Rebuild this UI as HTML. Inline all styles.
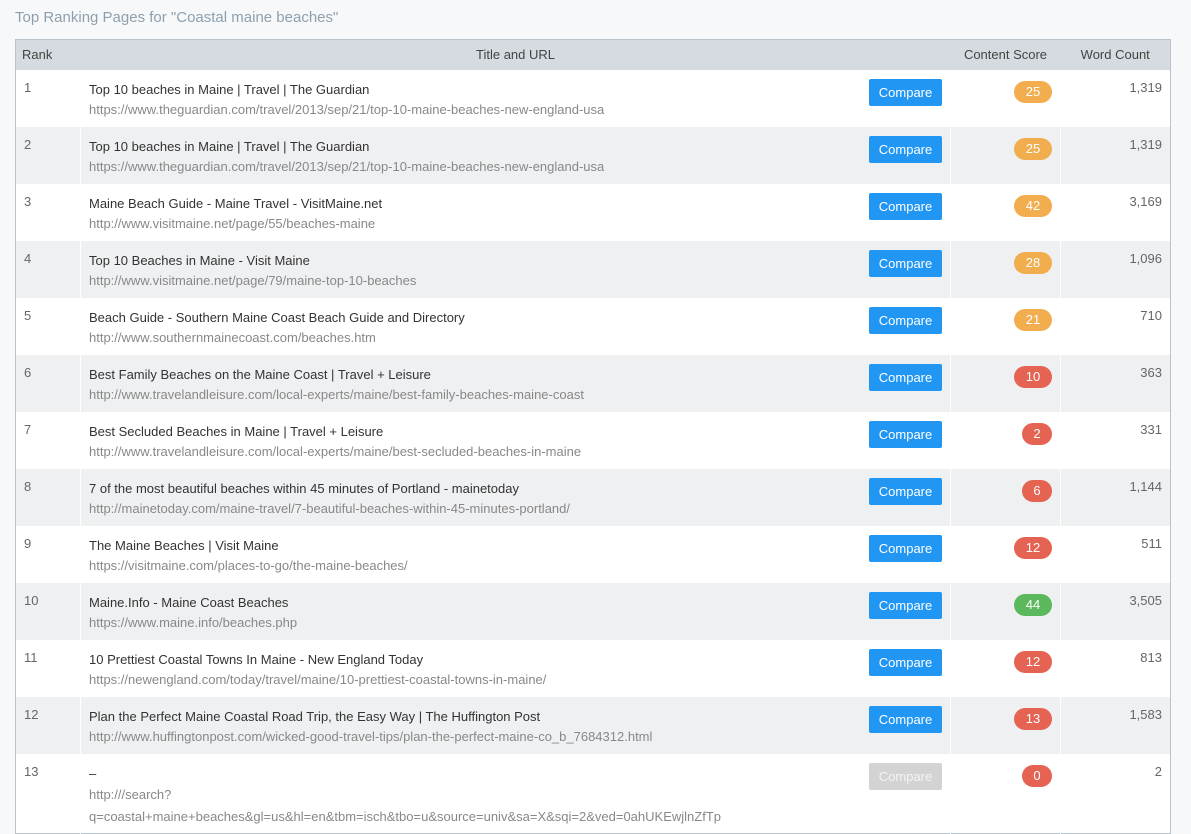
<!DOCTYPE html>
<html><head><meta charset="utf-8"><style>
*{box-sizing:border-box;margin:0;padding:0}
body{width:1191px;height:819px;overflow:hidden;background:#f7f8fa;font-family:"Liberation Sans",sans-serif;font-size:13px;color:#333}
h1{position:absolute;left:15px;top:9px;font-weight:normal;font-size:15px;color:#8fa0ad}
table{position:absolute;left:15px;top:39px;width:1156px;border-collapse:collapse;border:1px solid #b9c3cb;background:#fff}
th{background:#d5dbe0;height:30px;font-weight:normal;color:#444;font-size:13px;padding:0 6px}
td{vertical-align:top;height:57px;padding:10px 8px 0 8px;border-left:1px solid #fff}
tr:nth-child(odd) td{background:#eff0f2}
td.r{color:#666;padding-left:8px;width:65px;border-left:none}
.t{color:#333;line-height:20px}
.u{color:#888;line-height:20px}
.b{float:right;margin-top:-1px;margin-right:0px;background:#2196f3;color:#fff;border-radius:2px;width:73px;height:27px;line-height:27px;text-align:center}
.b.d{background:#d3d3d3;color:#f4f4f4}
.ti{width:870px;position:relative}
.cs{width:110px;text-align:right;padding-right:8px;padding-top:11px}
.wc{width:110px;text-align:right;color:#666}
.p{display:inline-block;width:38px;height:22px;line-height:22px;border-radius:11px;color:#fff;text-align:center;font-size:13px}
.o{background:#f2ad4e}.rd{background:#e46353}.g{background:#5cb85c}
</style></head><body>
<h1>Top Ranking Pages for "Coastal maine beaches"</h1>
<table>
<tr><th style="text-align:left">Rank</th><th>Title and URL</th><th>Content Score</th><th>Word Count</th></tr>
<tr><td class="r">1</td><td class="ti"><span class="b">Compare</span><div class="t">Top 10 beaches in Maine | Travel | The Guardian</div><div class="u">https://www.theguardian.com/travel/2013/sep/21/top-10-maine-beaches-new-england-usa</div></td><td class="cs"><span class="p o">25</span></td><td class="wc">1,319</td></tr>
<tr><td class="r">2</td><td class="ti"><span class="b">Compare</span><div class="t">Top 10 beaches in Maine | Travel | The Guardian</div><div class="u">https://www.theguardian.com/travel/2013/sep/21/top-10-maine-beaches-new-england-usa</div></td><td class="cs"><span class="p o">25</span></td><td class="wc">1,319</td></tr>
<tr><td class="r">3</td><td class="ti"><span class="b">Compare</span><div class="t">Maine Beach Guide - Maine Travel - VisitMaine.net</div><div class="u">http://www.visitmaine.net/page/55/beaches-maine</div></td><td class="cs"><span class="p o">42</span></td><td class="wc">3,169</td></tr>
<tr><td class="r">4</td><td class="ti"><span class="b">Compare</span><div class="t">Top 10 Beaches in Maine - Visit Maine</div><div class="u">http://www.visitmaine.net/page/79/maine-top-10-beaches</div></td><td class="cs"><span class="p o">28</span></td><td class="wc">1,096</td></tr>
<tr><td class="r">5</td><td class="ti"><span class="b">Compare</span><div class="t">Beach Guide - Southern Maine Coast Beach Guide and Directory</div><div class="u">http://www.southernmainecoast.com/beaches.htm</div></td><td class="cs"><span class="p o">21</span></td><td class="wc">710</td></tr>
<tr><td class="r">6</td><td class="ti"><span class="b">Compare</span><div class="t">Best Family Beaches on the Maine Coast | Travel + Leisure</div><div class="u">http://www.travelandleisure.com/local-experts/maine/best-family-beaches-maine-coast</div></td><td class="cs"><span class="p rd">10</span></td><td class="wc">363</td></tr>
<tr><td class="r">7</td><td class="ti"><span class="b">Compare</span><div class="t">Best Secluded Beaches in Maine | Travel + Leisure</div><div class="u">http://www.travelandleisure.com/local-experts/maine/best-secluded-beaches-in-maine</div></td><td class="cs"><span class="p rd" style="width:30px">2</span></td><td class="wc">331</td></tr>
<tr><td class="r">8</td><td class="ti"><span class="b">Compare</span><div class="t">7 of the most beautiful beaches within 45 minutes of Portland - mainetoday</div><div class="u">http://mainetoday.com/maine-travel/7-beautiful-beaches-within-45-minutes-portland/</div></td><td class="cs"><span class="p rd" style="width:30px">6</span></td><td class="wc">1,144</td></tr>
<tr><td class="r">9</td><td class="ti"><span class="b">Compare</span><div class="t">The Maine Beaches | Visit Maine</div><div class="u">https://visitmaine.com/places-to-go/the-maine-beaches/</div></td><td class="cs"><span class="p rd">12</span></td><td class="wc">511</td></tr>
<tr><td class="r">10</td><td class="ti"><span class="b">Compare</span><div class="t">Maine.Info - Maine Coast Beaches</div><div class="u">https://www.maine.info/beaches.php</div></td><td class="cs"><span class="p g">44</span></td><td class="wc">3,505</td></tr>
<tr><td class="r">11</td><td class="ti"><span class="b">Compare</span><div class="t">10 Prettiest Coastal Towns In Maine - New England Today</div><div class="u">https://newengland.com/today/travel/maine/10-prettiest-coastal-towns-in-maine/</div></td><td class="cs"><span class="p rd">12</span></td><td class="wc">813</td></tr>
<tr><td class="r">12</td><td class="ti"><span class="b">Compare</span><div class="t">Plan the Perfect Maine Coastal Road Trip, the Easy Way | The Huffington Post</div><div class="u">http://www.huffingtonpost.com/wicked-good-travel-tips/plan-the-perfect-maine-co_b_7684312.html</div></td><td class="cs"><span class="p rd">13</span></td><td class="wc">1,583</td></tr>
<tr><td class="r">13</td><td class="ti" style="height:80px"><span class="b d">Compare</span><div class="t">–</div><div class="u" style="line-height:22px">http:///search?<br>q=coastal+maine+beaches&amp;gl=us&amp;hl=en&amp;tbm=isch&amp;tbo=u&amp;source=univ&amp;sa=X&amp;sqi=2&amp;ved=0ahUKEwjlnZfTp</div></td><td class="cs"><span class="p rd" style="width:30px">0</span></td><td class="wc">2</td></tr>
</table>
</body></html>
